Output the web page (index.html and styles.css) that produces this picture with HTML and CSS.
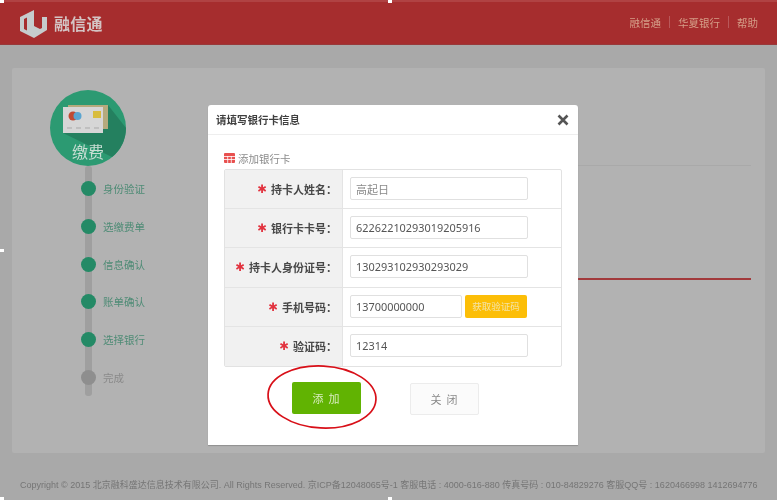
FILE: index.html
```html
<!DOCTYPE html>
<html lang="zh-CN">
<head>
<meta charset="utf-8">
<title>融信通</title>
<link rel="stylesheet" href="styles.css">
</head>
<body>
<div class="page">
  <header class="topbar">
    <div class="brand">
      <svg class="brand-logo" width="30" height="30" viewBox="0 0 30 30">
        <path d="M1 8 L15 1 V17 L21 20 L23 19 V8 L28 8 V21 L15 29 L1 22 Z M5 10 V20 L8 21.5 V8.5 Z" fill="#c6cccd" fill-rule="evenodd"/>
      </svg>
      <span class="brand-name">融信通</span>
    </div>
    <nav class="topnav">
      <a>融信通</a><i></i><a>华夏银行</a><i></i><a>帮助</a>
    </nav>
  </header>

  <main class="panel">
    <aside class="steps">
      <div class="badge">
        <svg class="badge-art" width="76" height="76" viewBox="0 0 76 76">
          <circle cx="38" cy="38" r="38" fill="#2c9a72"/>
          <path d="M58 15 L76 38 A38 38 0 0 1 62 67 L13 43 Z" fill="#24805f"/>
          <rect x="18" y="15" width="40" height="24" fill="#b5aa7d"/>
          <rect x="13" y="17" width="40" height="26" fill="#d6d6d6"/>
          <circle cx="23" cy="26" r="4.5" fill="#c04a32"/>
          <circle cx="27.5" cy="26" r="4" fill="#5aa5d0"/>
          <rect x="43" y="21" width="8" height="7" fill="#d8bc3e"/>
          <path d="M17 38 H22 M26 38 H31 M35 38 H40 M44 38 H49" stroke="#a9a9a9" stroke-width="1"/>
        </svg>
        <span class="badge-label">缴费</span>
      </div>
      <ol class="step-list">
        <li class="step"><span class="dot"></span>身份验证</li>
        <li class="step"><span class="dot"></span>选缴费单</li>
        <li class="step"><span class="dot"></span>信息确认</li>
        <li class="step"><span class="dot"></span>账单确认</li>
        <li class="step"><span class="dot"></span>选择银行</li>
        <li class="step step-off"><span class="dot"></span>完成</li>
      </ol>
    </aside>
    <section class="content">
      <div class="rule-faint"></div>
      <div class="rule-red"></div>
    </section>
  </main>

  <footer class="footer">Copyright © 2015 北京融科盛达信息技术有限公司. All Rights Reserved. 京ICP备12048065号-1 客服电话 : 4000-616-880 传真号码 : 010-84829276 客服QQ号 : 1620466998 1412694776</footer>

  <div class="modal">
    <div class="modal-head">
      <h2 class="modal-title">请填写银行卡信息</h2>
      <svg class="modal-close" width="12" height="12" viewBox="0 0 12 12"><path d="M1.5 1.5 L10.5 10.5 M10.5 1.5 L1.5 10.5" stroke="#555" stroke-width="2.6"/></svg>
    </div>
    <div class="modal-body">
      <div class="sub">
        <svg width="11" height="10" viewBox="0 0 11 10"><rect width="11" height="10" rx="1" fill="#e8504f"/><path d="M0 3.5 H11 M0 6.5 H11 M3.7 3 V10 M7.3 3 V10" stroke="#fff" stroke-width=".8"/></svg>
        添加银行卡
      </div>
      <div class="form">
        <div class="row"><div class="label"><b class="req">✱</b>持卡人姓名：</div><div class="field"><span class="input input-cn">高起日</span></div></div>
        <div class="row"><div class="label"><b class="req">✱</b>银行卡卡号：</div><div class="field"><span class="input">62262210293019205916</span></div></div>
        <div class="row"><div class="label"><b class="req">✱</b>持卡人身份证号：</div><div class="field"><span class="input">130293102930293029</span></div></div>
        <div class="row"><div class="label"><b class="req">✱</b>手机号码：</div><div class="field"><span class="input input-short">13700000000</span><span class="code-btn">获取验证码</span></div></div>
        <div class="row"><div class="label"><b class="req">✱</b>验证码：</div><div class="field"><span class="input">12314</span></div></div>
      </div>
      <div class="actions">
        <span class="btn btn-add">添 加</span>
        <span class="btn btn-close">关 闭</span>
        <svg class="ring" width="114" height="68" viewBox="0 0 114 68"><ellipse cx="57" cy="34" rx="54" ry="31" transform="rotate(3 57 34)" fill="none" stroke="#d80f18" stroke-width="1.7"/></svg>
      </div>
    </div>
  </div>

  <span class="handle h-tl"></span>
  <span class="handle h-tc"></span>
  <span class="handle h-ml"></span>
  <span class="handle h-bl"></span>
  <span class="handle h-bc"></span>
</div>
</body>
</html>
```
FILE: styles.css
```css
* { box-sizing: border-box; }
html, body { margin: 0; padding: 0; }
body { width: 777px; height: 500px; overflow: hidden; background: #a9a9a9; font-family: "Liberation Sans", "Noto Sans CJK SC", sans-serif; }
.page { position: relative; width: 777px; height: 500px; display: flex; flex-direction: column; background: #a9a9a9; filter: blur(.45px); }

.topbar { height: 45px; flex: none; display: flex; align-items: center; justify-content: space-between; padding: 0 19px 0 19px; background: #a62d2e; border-top: 2px solid #b04243; border-bottom: 1px solid #98393a; }
.brand { display: flex; align-items: center; gap: 5px; }
.brand-logo { display: block; margin-top: 1px; }
.brand-name { font-size: 16px; font-weight: 700; color: #d4c4c4; letter-spacing: .3px; margin-top: -1px; }
.topnav { display: flex; align-items: center; font-size: 10.5px; color: #d59e88; margin-top: -2px; }
.topnav a { display: block; }
.topnav i { width: 1px; height: 12px; margin: 0 8px; background: #b9585a; }

.panel { margin: 23px 12px 0; height: 385px; flex: none; display: flex; background: #b2b2b2; border-radius: 2px; }
.steps { position: relative; width: 114px; flex: none; padding: 22px 0 0 38px; }
.badge { position: relative; width: 76px; height: 76px; }
.badge-art { display: block; }
.badge-label { position: absolute; left: 0; right: 0; top: 49px; text-align: center; font-size: 16px; color: #c8ddd3; }
.step-list { position: relative; list-style: none; margin: 0; padding: 4px 0 0 31px; height: 230px; }
.step-list::before { content: ""; position: absolute; left: 35px; top: 0; width: 7px; height: 230px; background: #9f9f9f; border-radius: 3px; }
.step { position: relative; display: flex; align-items: center; gap: 7px; height: 37.7px; font-size: 10.5px; color: #4f8c76; white-space: nowrap; }
.dot { width: 15px; height: 15px; border-radius: 50%; background: #248a66; flex: none; }
.step-off { color: #8a8a8a; }
.step-off .dot { background: #8e8e8e; }

.content { flex: 1; padding: 97px 14px 0 150px; }
.rule-faint { height: 1px; background: #a9a9a9; }
.rule-red { height: 2px; margin-top: 112px; background: #a23a3c; }

.footer { margin: 26px 0 0 20px; font-size: 9px; line-height: 12px; color: #757575; white-space: nowrap; }

.modal { position: absolute; left: 208px; top: 105px; width: 370px; height: 340px; background: #fff; border-radius: 3px 3px 0 0; box-shadow: 0 1px 1px #8f8f8f; }
.modal-head { height: 30px; display: flex; align-items: center; justify-content: space-between; padding: 0 9px 0 8px; border-bottom: 1px solid #eeeeee; }
.modal-title { margin: 0; font-size: 10.5px; font-weight: 700; color: #3f3f3f; }
.modal-body { padding: 15px 16px 0; }
.sub { display: flex; align-items: center; gap: 3px; height: 19px; padding-bottom: 3px; font-size: 10.5px; color: #8c8c8c; }
.form { height: 198px; display: grid; grid-template-rows: repeat(5, 1fr); border: 1px solid #e2e2e2; border-radius: 2px; width: 338px; }
.row { display: flex; border-bottom: 1px solid #e4e4e4; }
.row:last-child { border-bottom: 0; }
.label { width: 118px; flex: none; display: flex; align-items: center; justify-content: flex-end; padding-right: 5px; background: #f1f1f1; border-right: 1px solid #e4e4e4; font-size: 11px; font-weight: 700; color: #484848; }
.req { color: #e2333f; margin-right: 4px; font-size: 11.5px; font-family: "DejaVu Sans", sans-serif; }
.field { flex: 1; display: flex; align-items: center; gap: 3px; padding-left: 7px; padding-bottom: 1px; }
.input { width: 178px; height: 23px; display: flex; align-items: center; padding-left: 5px; border: 1px solid #e0e0e0; border-radius: 2px; font-family: "Noto Sans", "Noto Sans CJK SC", sans-serif; font-size: 10.9px; color: #555; background: #fff; white-space: pre; }
.input-cn { color: #8a8a8a; font-size: 11px; }
.input-short { width: 112px; }
.code-btn { width: 62px; height: 23px; display: flex; align-items: center; justify-content: center; background: #fcbe07; border-radius: 2px; font-size: 9.5px; color: #f4e3a6; }

.actions { position: relative; display: flex; gap: 49px; padding: 15px 0 0 68px; }
.btn { width: 69px; height: 32px; display: flex; align-items: center; justify-content: center; border-radius: 2px; font-size: 11px; letter-spacing: 1px; }
.btn-add { background: #61b302; color: #d9ecc0; }
.btn-close { background: #fbfbfb; border: 1px solid #ececec; color: #8a8a8a; margin-top: 1px; }
.ring { position: absolute; left: 41px; top: -4px; }

.handle { position: absolute; width: 4px; height: 3px; background: #fff; }
.h-tl { left: 0; top: 0; }
.h-tc { left: 388px; top: 0; }
.h-ml { left: 0; top: 249px; }
.h-bl { left: 0; top: 497px; }
.h-bc { left: 388px; top: 497px; }
```
